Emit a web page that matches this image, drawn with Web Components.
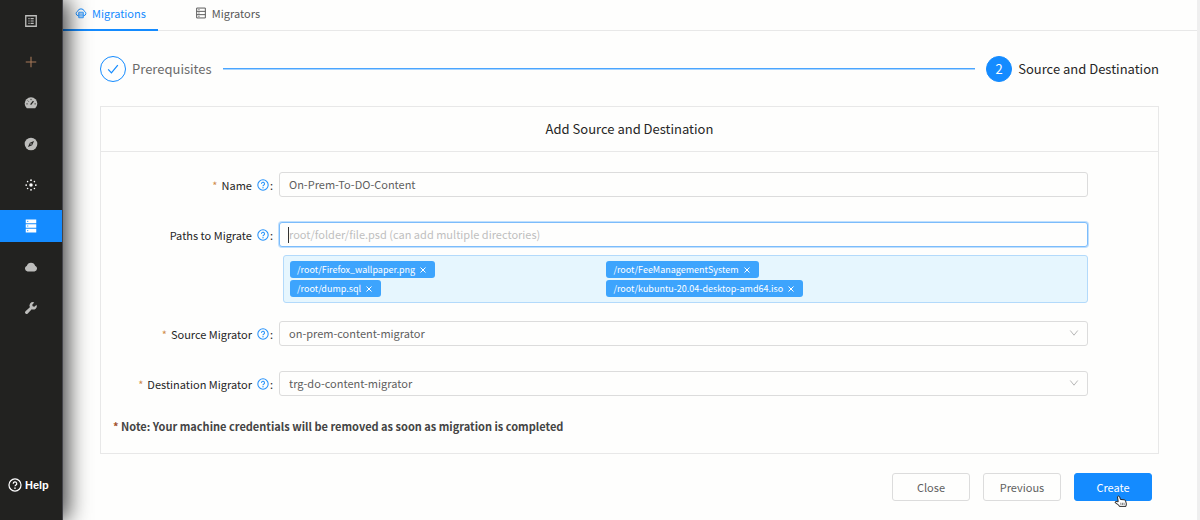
<!DOCTYPE html>
<html lang="en">
<head>
<meta charset="utf-8">
<title>Migrations</title>
<style>
    body {
        margin: 0;
        background: #fefefd;
        color: #262626;
        font-family: 'Noto Sans CJK SC', 'Noto Sans', sans-serif;
        font-size: 11px;
        line-height: 16px;
        --blue: #148bff;
        --line: #e8e8e8;
        --field: #dcdcdc;
    }
</style>
</head>
<body>
<migration-app></migration-app>

<script>
const icons = {
    list: '<path d="M2 2h12v12H2z" fill="none" stroke="currentColor" stroke-width="1.500"/><path d="M5 5.300h1.400M5 8h1.400M5 10.700h1.400M7.500 5.300h3.600M7.500 8h3.600M7.500 10.700h3.600" stroke="currentColor" stroke-width="1.300"/>',
    plus: '<path d="M8 2v12M2 8h12" stroke="currentColor" stroke-width="1.200"/>',
    gauge: '<path d="M3.200 14A7.200 7.200 0 1 1 12.800 14z" fill="currentColor"/><path d="M7.600 9.800l3.200-4" stroke="#222220" stroke-width="1.500"/><path d="M2.700 9h1.500M4.300 5.300l1 1M8 3.300v1.400M12 9h1.500" stroke="#222220"/>',
    compass: '<circle cx="8" cy="8" r="7.200" fill="currentColor"/><path d="M11.500 4.500L9.300 9.300 4.500 11.500 6.700 6.700z" fill="#222220"/><circle cx="8" cy="8" r=".9" fill="currentColor"/>',
    burst: '<g fill="currentColor"><circle cx="8" cy="8" r="2"/><circle cx="8" cy="2.500" r="1"/><circle cx="8" cy="13.500" r="1"/><circle cx="2.500" cy="8" r="1"/><circle cx="13.500" cy="8" r="1"/><circle cx="4.100" cy="4.100" r=".9"/><circle cx="11.900" cy="4.100" r=".9"/><circle cx="4.100" cy="11.900" r=".9"/><circle cx="11.900" cy="11.900" r=".9"/></g>',
    server: '<path d="M2 .6h12v4.300H2zM2 5.900h12v4.200H2zM2 11.100h12v4.300H2z" fill="currentColor"/><path d="M3.500 2.700h1.400M3.500 8h1.400M3.500 13.300h1.400" stroke="#148bff"/>',
    cloud: '<path d="M4 13a3.300 3.300 0 0 1-.7-6.400 4.900 4.900 0 0 1 9.400 0A3.300 3.300 0 0 1 12 13z" fill="currentColor"/>',
    wrench: '<path d="M14.400 4.300a4 4 0 0 1-5.600 5L4.300 14.300a1.700 1.700 0 0 1-2.600-2.600l5-4.500a4 4 0 0 1 5-5.600L9.400 4.200l.5 1.900 1.900.5z" fill="currentColor"/>',
    help: '<circle cx="8" cy="8" r="6.900" fill="none" stroke="currentColor" stroke-width="1.400"/><path d="M6 6.500a2 2 0 1 1 2.800 1.700q-.8.400-.8 1.300" fill="none" stroke="currentColor" stroke-width="1.400"/><circle cx="8" cy="11.600" r=".9" fill="currentColor"/>',
    cloudServer: '<path d="M4.500 11.500H4a2.900 2.900 0 0 1-.6-5.600 4.800 4.800 0 0 1 9.200 0 2.900 2.900 0 0 1-.6 5.600h-.5" fill="none" stroke="currentColor" stroke-width="1.300"/><path d="M5 7h6v7.300H5zM5 9.400h6M5 11.900h6" fill="none" stroke="currentColor" stroke-width="1.200"/>',
    rack: '<path d="M2.200 1.400h11.600v13.200H2.200zM2.200 5.800h11.600M2.200 10.200h11.600" fill="none" stroke="currentColor" stroke-width="1.300"/><path d="M4.500 3.600H6M4.500 8H6M4.500 12.400H6" stroke="currentColor" stroke-width="1.300"/>',
    check: '<path d="M2.500 8.500l3.700 4L13.500 3.500" fill="none" stroke="currentColor" stroke-width="1.400"/>',
    close: '<path d="M3 3l10 10M13 3L3 13" stroke="currentColor" stroke-width="2"/>',
    down: '<path d="M2 4l6 7.500L14 4" fill="none" stroke="currentColor" stroke-width="1.600"/>',
    hand: '<path d="M5 1.500q1.200-.8 1.900.5L8 5.500l4.700.4q1.300.2 1.600 1.500l.9 3.600-.5 3H6.500l-.8-1.800-4-2.400q-1-1.400.5-1.800l3 .3L4.300 2.500q-.1-.7.7-1z" fill="#fff" stroke="#222" stroke-width="1.200"/><path d="M8.300 9.500l.3 2.800M10.300 9.500l.3 2.800M12.300 9.500l.2 2.800" stroke="#222" stroke-width=".7"/>',
}

customElements.define(
    'ui-icon',
    class extends HTMLElement {
        constructor() {
            super()
            this.attachShadow({ mode: 'open' })
        }
        connectedCallback() {
            this.shadowRoot.innerHTML = `
                <style>
                    :host {
                        display: inline-block;
                        flex: none;
                        width: var(--size, 14px);
                        height: var(--size, 14px);
                    }
                    svg {
                        display: block;
                        width: 100%;
                        height: 100%;
                    }
                </style>
                <svg viewBox="0 0 16 16" aria-hidden="true">${icons[this.getAttribute('name')]}</svg>
            `
        }
    }
)

customElements.define(
    'side-nav',
    class extends HTMLElement {
        constructor() {
            super()
            this.attachShadow({ mode: 'open' })
        }
        connectedCallback() {
            const items = [
                ['list', 'Overview'],
                ['plus', 'Add'],
                ['gauge', 'Dashboard'],
                ['compass', 'Explore'],
                ['burst', 'Services'],
                ['server', 'Servers'],
                ['cloud', 'Cloud'],
                ['wrench', 'Tools'],
            ]
            this.shadowRoot.innerHTML = `
                <style>
                    :host {
                        display: flex;
                        flex-direction: column;
                        flex: none;
                        box-sizing: border-box;
                        width: 62px;
                        padding: 5px 0 27px;
                        border-right: 1px solid #44444a;
                        background: #222220;
                        box-shadow: 5px 0 22px rgba(0, 0, 0, 0.75);
                        z-index: 1;
                    }
                    nav {
                        display: flex;
                        flex-direction: column;
                        gap: 9px;
                    }
                    a {
                        display: flex;
                        color: #bdbdbb;
                        text-decoration: none;
                    }
                    nav a {
                        height: 32px;
                        align-items: center;
                        justify-content: center;
                    }
                    nav a.plus { color: #a87958; }
                    nav a.burst { color: #fff; }
                    nav a.server {
                        background: var(--blue);
                        color: #fff;
                    }
                    .help {
                        align-items: center;
                        gap: 3px;
                        margin-top: auto;
                        padding-left: 8px;
                        color: #fff;
                        font: bold 11px/16px 'Liberation Sans', sans-serif;
                    }
                    :host { box-sizing: content-box; }
                </style>
                <nav>
                    ${items.map(([icon, label]) => `<a href="#" class="${icon}" aria-label="${label}"><ui-icon name="${icon}"></ui-icon></a>`).join('')}
                </nav>
                <a href="#" class="help"><ui-icon name="help"></ui-icon>Help</a>
            `
        }
    }
)

customElements.define(
    'tab-bar',
    class extends HTMLElement {
        constructor() {
            super()
            this.attachShadow({ mode: 'open' })
            this.shadowRoot.innerHTML = `
                <style>
                    :host {
                        display: flex;
                        gap: 25px;
                        border-bottom: 1px solid var(--line);
                    }
                    a {
                        display: flex;
                        align-items: center;
                        gap: 5px;
                        padding: 5px 12px 8px;
                        margin-bottom: -1px;
                        border-bottom: 2px solid transparent;
                        color: #595959;
                        text-decoration: none;
                        --size: 12px;
                    }
                    a.active {
                        border-color: var(--blue);
                        color: var(--blue);
                    }
                </style>
                <a href="#" class="active"><ui-icon name="cloudServer"></ui-icon>Migrations</a>
                <a href="#"><ui-icon name="rack"></ui-icon>Migrators</a>
            `
        }
    }
)

customElements.define(
    'step-bar',
    class extends HTMLElement {
        constructor() {
            super()
            this.attachShadow({ mode: 'open' })
            this.shadowRoot.innerHTML = `
                <style>
                    :host {
                        display: flex;
                        align-items: center;
                        font-size: 13px;
                    }
                    .dot {
                        display: flex;
                        align-items: center;
                        justify-content: center;
                        box-sizing: border-box;
                        width: 26px;
                        height: 26px;
                        margin-right: 6px;
                        border: 1px solid var(--blue);
                        border-radius: 50%;
                        color: var(--blue);
                    }
                    .current {
                        background: var(--blue);
                        color: #fff;
                    }
                    .done { color: #6b6b6b; }
                    .rail {
                        flex: 1;
                        margin: 0 11px;
                        border-top: 1px solid #4aa5ff;
                        border-bottom: 1px solid #a8d4fe;
                    }
                </style>
                <span class="dot"><ui-icon name="check"></ui-icon></span>
                <span class="done">Prerequisites</span>
                <span class="rail"></span>
                <span class="dot current">2</span>
                <span>Source and Destination</span>
            `
        }
    }
)

customElements.define(
    'path-tag',
    class extends HTMLElement {
        constructor() {
            super()
            this.attachShadow({ mode: 'open' })
            this.shadowRoot.innerHTML = `
                <style>
                    :host {
                        display: flex;
                        align-items: center;
                        justify-self: start;
                        gap: 4px;
                        padding: 0 8px 0 7px;
                        border-radius: 3px;
                        background: #3da4fd;
                        color: #fff;
                        font-size: 9px;
                        line-height: 17px;
                        white-space: nowrap;
                    }
                    button {
                        display: flex;
                        padding: 0;
                        border: 0;
                        background: none;
                        color: inherit;
                        --size: 8px;
                    }
                </style>
                <slot></slot>
                <button type="button" aria-label="Remove"><ui-icon name="close"></ui-icon></button>
            `
        }
    }
)

customElements.define(
    'form-field',
    class extends HTMLElement {
        constructor() {
            super()
            this.attachShadow({ mode: 'open' })
        }
        get control() {
            const value = this.getAttribute('value') || ''
            if (this.getAttribute('type') === 'select') {
                return `<select id="control"><option>${value}</option></select>
                    <ui-icon class="arrow" name="down"></ui-icon>`
            }
            return `<input id="control" type="text" value="${value}" placeholder="${this.getAttribute('placeholder') || ''}">
                ${this.hasAttribute('active') ? '<span class="caret"></span>' : ''}`
        }
        connectedCallback() {
            this.shadowRoot.innerHTML = `
                <style>
                    :host {
                        display: grid;
                        grid-template-columns: 160px 1fr;
                        column-gap: 6px;
                    }
                    label {
                        display: flex;
                        align-items: center;
                        justify-content: flex-end;
                        height: 25px;
                        white-space: nowrap;
                    }
                    :host([required]) label::before {
                        content: '*';
                        margin-right: 4px;
                        color: #d08c4a;
                    }
                    label ui-icon {
                        --size: 12px;
                        margin: 0 1px 0 5px;
                        color: #2491fb;
                    }
                    .box { position: relative; }
                    input, select {
                        display: block;
                        box-sizing: border-box;
                        width: 100%;
                        height: 25px;
                        margin: 0;
                        padding: 0 9px 1px;
                        border: 1px solid var(--field);
                        border-radius: 3px;
                        outline: 0;
                        appearance: none;
                        background: #fefefd;
                        color: #5f5f5f;
                        font: inherit;
                    }
                    input::placeholder { color: #bfbfbf; }
                    :host([active]) input {
                        border-color: #7cbcfb;
                        box-shadow: 0 0 0 1px #c0e0fe;
                    }
                    .caret {
                        position: absolute;
                        left: 9px;
                        top: 5px;
                        width: 1px;
                        height: 16px;
                        background: #333;
                    }
                    .arrow {
                        --size: 10px;
                        position: absolute;
                        right: 9px;
                        top: 7px;
                        color: #b8b8b8;
                        pointer-events: none;
                    }
                </style>
                <label for="control">${this.getAttribute('label')}<ui-icon name="help"></ui-icon>:</label>
                <div>
                    <div class="box">${this.control}</div>
                    <slot></slot>
                </div>
            `
        }
    }
)

customElements.define(
    'ui-button',
    class extends HTMLElement {
        constructor() {
            super()
            this.attachShadow({ mode: 'open' })
            this.shadowRoot.innerHTML = `
                <style>
                    :host { display: block; }
                    button {
                        display: block;
                        box-sizing: border-box;
                        min-width: 78px;
                        height: 28px;
                        padding: 0 12px;
                        border: 1px solid var(--field);
                        border-radius: 3px;
                        background: #fefefd;
                        color: #5f5f5f;
                        font: inherit;
                    }
                    :host([primary]) button {
                        border-color: var(--blue);
                        background: var(--blue);
                        color: #fff;
                    }
                </style>
                <button type="button"><slot></slot></button>
            `
        }
    }
)

customElements.define(
    'migration-app',
    class extends HTMLElement {
        constructor() {
            super()
            this.attachShadow({ mode: 'open' })
            this.shadowRoot.innerHTML = `
                <style>
                    :host {
                        display: flex;
                        min-height: 100vh;
                    }
                    main {
                        flex: 1;
                        min-width: 0;
                        border-right: 3px solid #efefef;
                    }
                    .page { padding: 25px 38px 18px 37px; }
                    .card {
                        margin-top: 24px;
                        border: 1px solid var(--line);
                    }
                    h1 {
                        margin: 0;
                        padding: 14px;
                        border-bottom: 1px solid var(--line);
                        font-size: 13px;
                        font-weight: normal;
                        text-align: center;
                    }
                    form {
                        display: flex;
                        flex-direction: column;
                        gap: 25px;
                        padding: 20px 70px 19px 12px;
                    }
                    .tags {
                        display: grid;
                        grid-template-columns: 2fr 3fr;
                        gap: 2px 0;
                        margin: 8px 0 -7px 4px;
                        padding: 5px 6px;
                        border: 1px solid #b3dafb;
                        border-radius: 3px;
                        background: #e6f6fe;
                    }
                    .note {
                        margin: -3px 0 0;
                        color: #444;
                        font-weight: bold;
                    }
                    .note span { color: #a0522d; }
                    footer {
                        display: flex;
                        justify-content: flex-end;
                        gap: 13px;
                        padding: 19px 7px 0;
                    }
                    .create { position: relative; }
                    .pointer {
                        --size: 13px;
                        position: absolute;
                        left: 40px;
                        top: 22px;
                        pointer-events: none;
                    }
                </style>
                <side-nav></side-nav>
                <main>
                    <tab-bar></tab-bar>
                    <div class="page">
                        <step-bar></step-bar>
                        <section class="card">
                            <h1>Add Source and Destination</h1>
                            <form>
                                <form-field label="Name" required value="On-Prem-To-DO-Content"></form-field>
                                <form-field label="Paths to Migrate" active placeholder="root/folder/file.psd (can add multiple directories)">
                                    <div class="tags">
                                        <path-tag>/root/Firefox_wallpaper.png</path-tag>
                                        <path-tag>/root/FeeManagementSystem</path-tag>
                                        <path-tag>/root/dump.sql</path-tag>
                                        <path-tag>/root/kubuntu-20.04-desktop-amd64.iso</path-tag>
                                    </div>
                                </form-field>
                                <form-field label="Source Migrator" type="select" required value="on-prem-content-migrator"></form-field>
                                <form-field label="Destination Migrator" type="select" required value="trg-do-content-migrator"></form-field>
                                <p class="note"><span>*</span> Note: Your machine credentials will be removed as soon as migration is completed</p>
                            </form>
                        </section>
                        <footer>
                            <ui-button>Close</ui-button>
                            <ui-button>Previous</ui-button>
                            <div class="create">
                                <ui-button primary>Create</ui-button>
                                <ui-icon class="pointer" name="hand"></ui-icon>
                            </div>
                        </footer>
                    </div>
                </main>
            `
        }
    }
)
</script>
</body>
</html>
